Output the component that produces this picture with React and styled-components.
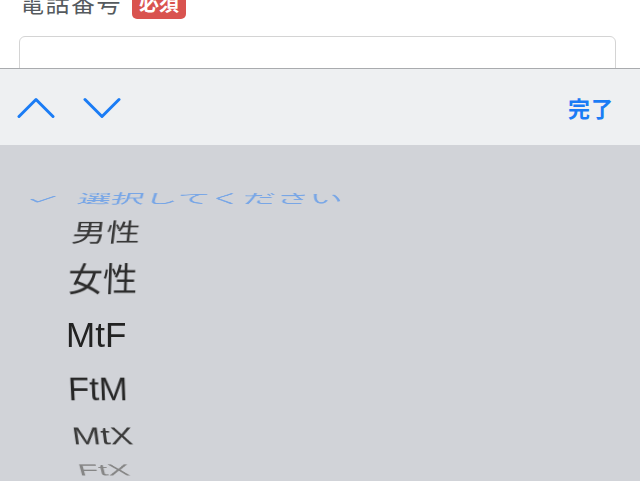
import styled, { createGlobalStyle } from 'styled-components';

const GlobalStyle = createGlobalStyle`
  html, body {
    margin: 0;
    padding: 0;
    background: #ffffff;
  }
  body {
    font-family: "Liberation Sans", "Noto Sans CJK JP", sans-serif;
  }
`;

const Page = styled.div`
  width: 640px;
  height: 481px;
  display: flex;
  flex-direction: column;
  overflow: hidden;
  background: #ffffff;
`;

const FormArea = styled.section`
  height: 68px;
  flex-shrink: 0;
  padding: 0 24px 0 19px;
  overflow: hidden;
  box-sizing: border-box;
`;

const LabelRow = styled.div`
  display: flex;
  align-items: flex-start;
  gap: 10px;
  margin-top: -10px;
  padding-left: 1px;
`;

const Label = styled.span`
  font-family: "Noto Sans CJK JP", sans-serif;
  font-size: 24px;
  line-height: 24px;
  color: #555a5e;
  letter-spacing: 1.5px;
`;

const Badge = styled.span`
  margin-top: 1px;
  height: 28px;
  padding: 0 7px;
  border-radius: 5px;
  background: #d9534f;
  color: #ffffff;
  font-family: "Noto Sans CJK JP", sans-serif;
  font-weight: 700;
  font-size: 20px;
  line-height: 24px;
`;

const Input = styled.div`
  margin-top: 17px;
  height: 60px;
  border: 1px solid #d4d4d4;
  border-radius: 6px;
  background: #ffffff;
`;

const Toolbar = styled.div`
  height: 77px;
  flex-shrink: 0;
  box-sizing: border-box;
  border-top: 1px solid #a9abae;
  background: #eef0f2;
  display: flex;
  align-items: center;
  padding: 0 26px 0 17px;
`;

const Arrows = styled.div`
  display: flex;
  gap: 28px;
  margin-top: 2px;
`;

const ArrowButton = styled.svg`
  width: 38px;
  height: 22px;
  display: block;
`;

const Done = styled.span`
  margin-left: auto;
  font-family: "Noto Sans CJK JP", sans-serif;
  font-weight: 700;
  font-size: 22px;
  color: #1a7cf5;
  letter-spacing: 1px;
`;

const Picker = styled.div`
  flex: 1;
  background: #d1d3d8;
  display: grid;
  grid-template-rows: 380px;
  align-items: center;
  overflow: hidden;
  perspective: 1500px;
  perspective-origin: 320px 190px;
`;

const Item = styled.div`
  grid-area: 1 / 1;
  display: flex;
  align-items: center;
  height: 40px;
  padding-left: 16px;
  transform: translateY(${(p) => p.$y}px) rotateX(${(p) => p.$tilt}deg)
    scale(${(p) => p.$scale});
  color: ${(p) => p.$color};
`;

const CheckSlot = styled.span`
  width: 50px;
  display: flex;
  align-items: center;
`;

const ItemText = styled.span`
  font-family: "Liberation Sans", "Noto Sans CJK JP", sans-serif;
  font-size: 35px;
  line-height: 40px;
  white-space: nowrap;
`;

// offsets from the wheel centre, tilt of each row, and how far back it sits
const options = [
  { label: '選択してください', y: -136, tilt: 62, scale: 0.953, color: '#78a6e6', selected: true },
  { label: '男性', y: -102, tilt: 40, scale: 0.976, color: '#383838' },
  { label: '女性', y: -55, tilt: 16, scale: 0.992, color: '#2c2c2c' },
  { label: 'MtF', y: 0, tilt: 0, scale: 1, color: '#222222' },
  { label: 'FtM', y: 54, tilt: -16, scale: 0.992, color: '#262626' },
  { label: 'MtX', y: 101, tilt: -40, scale: 0.976, color: '#3a3a3a' },
  { label: 'FtX', y: 135, tilt: -56, scale: 0.953, color: '#868686' },
];

function Chevron({ up }) {
  return (
    <ArrowButton viewBox="0 0 38 22">
      <polyline
        points={up ? '2,19.5 19,2.5 36,19.5' : '2,2.5 19,19.5 36,2.5'}
        fill="none"
        stroke="#1a7cf5"
        strokeWidth="3"
        strokeLinecap="round"
        strokeLinejoin="round"
      />
    </ArrowButton>
  );
}

function App() {
  return (
    <Page>
      <GlobalStyle />
      <FormArea>
        <LabelRow>
          <Label>電話番号</Label>
          <Badge>必須</Badge>
        </LabelRow>
        <Input />
      </FormArea>
      <Toolbar>
        <Arrows>
          <Chevron up />
          <Chevron />
        </Arrows>
        <Done>完了</Done>
      </Toolbar>
      <Picker>
        {options.map((o) => (
          <Item
            key={o.label}
            $y={o.y}
            $tilt={o.tilt}
            $scale={o.scale}
            $color={o.color}
          >
            <CheckSlot>
              {o.selected && (
                <svg width="26" height="22" viewBox="0 0 26 22">
                  <polyline
                    points="2,12 9,19 24,4"
                    fill="none"
                    stroke="currentColor"
                    strokeWidth="3"
                    strokeLinecap="round"
                    strokeLinejoin="round"
                  />
                </svg>
              )}
            </CheckSlot>
            <ItemText>{o.label}</ItemText>
          </Item>
        ))}
      </Picker>
    </Page>
  );
}

export default App;
